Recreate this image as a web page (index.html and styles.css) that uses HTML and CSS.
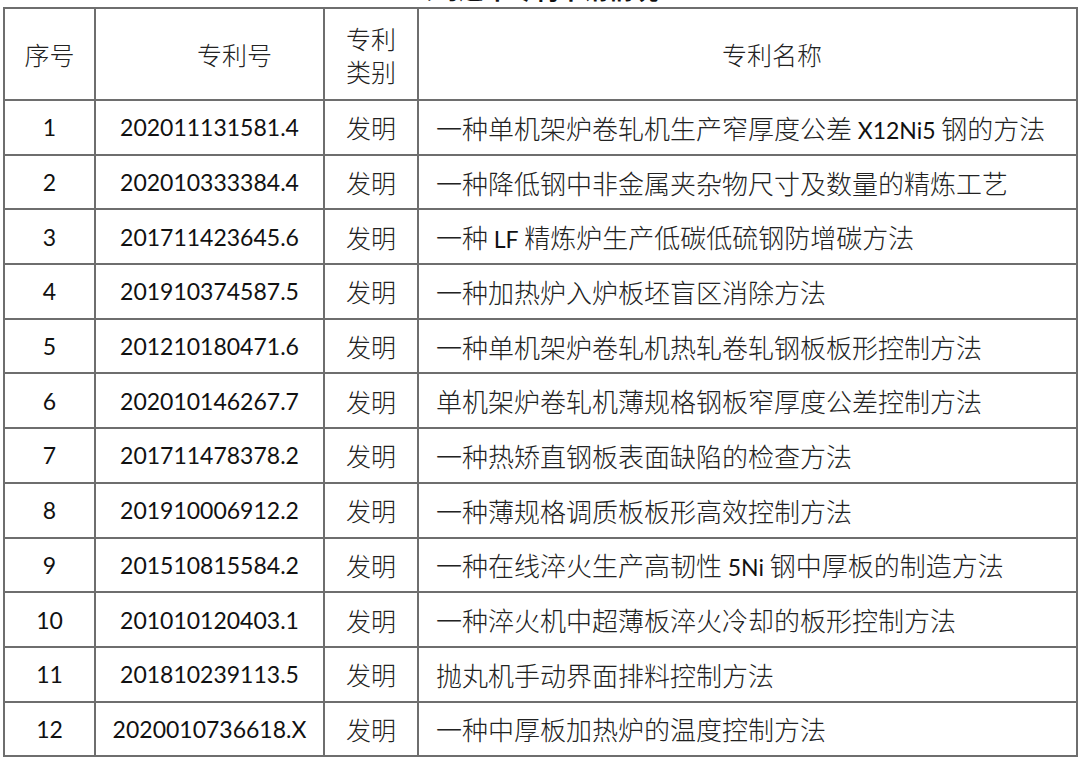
FILE: index.html
```html
<!DOCTYPE html>
<html lang="zh-CN">
<head>
<meta charset="utf-8">
<link rel="stylesheet" href="styles.css">
</head>
<body>
<div class="page">
  <div class="title-clip"><div class="title">公司近年专利申请情况</div></div>
  <table class="patents">
    <colgroup>
      <col class="c1"><col class="c2"><col class="c3"><col class="c4">
    </colgroup>
    <thead>
      <tr>
        <th>序号</th>
        <th class="h2">专利号</th>
        <th class="h3">专利<br>类别</th>
        <th class="h4">专利名称</th>
      </tr>
    </thead>
    <tbody>
      <tr><td class="num">1</td><td class="num">202011131581.4</td><td class="kind">发明</td><td class="name">一种单机架炉卷轧机生产窄厚度公差 <span class="lat">X12Ni5</span> 钢的方法</td></tr>
      <tr><td class="num">2</td><td class="num">202010333384.4</td><td class="kind">发明</td><td class="name">一种降低钢中非金属夹杂物尺寸及数量的精炼工艺</td></tr>
      <tr><td class="num">3</td><td class="num">201711423645.6</td><td class="kind">发明</td><td class="name">一种 <span class="lat">LF</span> 精炼炉生产低碳低硫钢防增碳方法</td></tr>
      <tr><td class="num">4</td><td class="num">201910374587.5</td><td class="kind">发明</td><td class="name">一种加热炉入炉板坯盲区消除方法</td></tr>
      <tr><td class="num">5</td><td class="num">201210180471.6</td><td class="kind">发明</td><td class="name">一种单机架炉卷轧机热轧卷轧钢板板形控制方法</td></tr>
      <tr><td class="num">6</td><td class="num">202010146267.7</td><td class="kind">发明</td><td class="name">单机架炉卷轧机薄规格钢板窄厚度公差控制方法</td></tr>
      <tr><td class="num">7</td><td class="num">201711478378.2</td><td class="kind">发明</td><td class="name">一种热矫直钢板表面缺陷的检查方法</td></tr>
      <tr><td class="num">8</td><td class="num">201910006912.2</td><td class="kind">发明</td><td class="name">一种薄规格调质板板形高效控制方法</td></tr>
      <tr><td class="num">9</td><td class="num">201510815584.2</td><td class="kind">发明</td><td class="name">一种在线淬火生产高韧性 <span class="lat">5Ni</span> 钢中厚板的制造方法</td></tr>
      <tr><td class="num">10</td><td class="num">201010120403.1</td><td class="kind">发明</td><td class="name">一种淬火机中超薄板淬火冷却的板形控制方法</td></tr>
      <tr><td class="num">11</td><td class="num">201810239113.5</td><td class="kind">发明</td><td class="name">抛丸机手动界面排料控制方法</td></tr>
      <tr><td class="num">12</td><td class="num">2020010736618.X</td><td class="kind">发明</td><td class="name">一种中厚板加热炉的温度控制方法</td></tr>
    </tbody>
  </table>
</div>
</body>
</html>
```
FILE: styles.css
```css
html, body {
  margin: 0;
  padding: 0;
  background: #ffffff;
}

.page {
  padding-left: 3px;
  width: 1073px;
}

.title-clip {
  height: 7px;
  overflow: hidden;
  position: relative;
}

.title {
  margin-top: -28px;
  padding-right: 12px;
  text-align: center;
  font-family: "Noto Sans CJK SC", sans-serif;
  font-size: 25px;
  line-height: 32px;
  font-weight: 700;
  color: #111;
}

.patents {
  border-collapse: collapse;
  table-layout: fixed;
  width: 1073px;
  color: #111;
}

.c1 { width: 91px; }
.c2 { width: 229px; }
.c3 { width: 94px; }
.c4 { width: 659px; }

.patents th,
.patents td {
  border: 2px solid #6e6e6e;
  padding: 0;
  text-align: center;
  vertical-align: middle;
}

.patents th {
  height: 88px;
  font-family: "Noto Sans CJK SC", sans-serif;
  font-size: 25px;
  font-weight: 300;
  line-height: 33px;
  color: #222;
}

.patents th.h2 { padding-left: 50px; }
.patents th.h3 { padding-top: 2px; }
.patents th.h4 { padding-left: 49px; }

.patents td {
  height: 52.7px;
}

.patents td.num {
  font-family: "Lato", "Noto Sans CJK SC", sans-serif;
  font-size: 23px;
  font-weight: 400;
  color: #111;
}

.patents td.kind {
  font-family: "Noto Sans CJK SC", sans-serif;
  font-size: 25px;
  font-weight: 300;
  color: #222;
}

.patents td.name {
  text-align: left;
  padding-left: 17px;
  font-family: "Noto Sans CJK SC", sans-serif;
  font-size: 26px;
  font-weight: 300;
  color: #222;
  white-space: nowrap;
}

.lat {
  font-family: "Lato", sans-serif;
  font-size: 23px;
  font-weight: 400;
  color: #111;
}
```
